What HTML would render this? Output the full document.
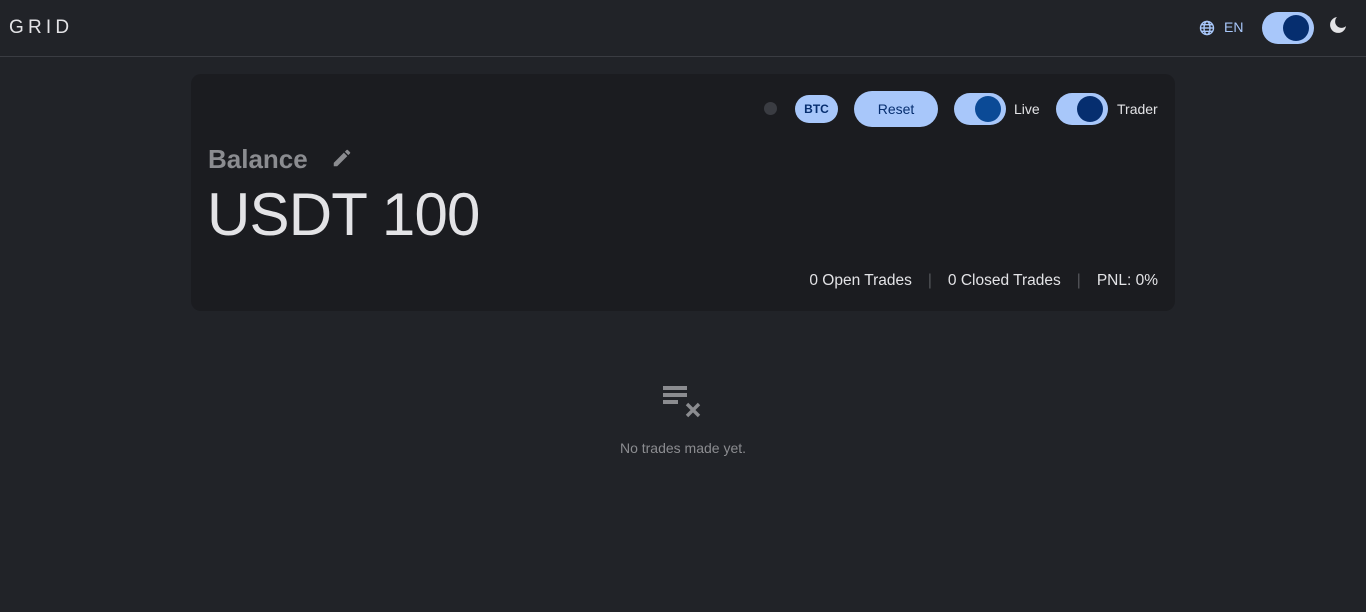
<!DOCTYPE html>
<html><head><meta charset="utf-8"><style>
*{margin:0;padding:0;box-sizing:border-box}
body{width:1366px;height:612px;background:#212328;font-family:"Liberation Sans",sans-serif;color:#e3e3e6;position:relative;overflow:hidden}
.hdr{position:absolute;left:0;top:0;width:1366px;height:57px;border-bottom:1px solid #3a3c42}
.logo{position:absolute;left:9px;top:17px;font-size:19px;letter-spacing:4.2px;color:#e3e3e6}
.abs{position:absolute}
.tog{position:absolute;width:52px;height:32px;border-radius:16px;background:#a8c7fa}
.tog .k{position:absolute;right:5px;top:3px;width:26px;height:26px;border-radius:50%;background:#062e6f}
.card{position:absolute;left:191px;top:74px;width:984px;height:237px;background:#1b1c20;border-radius:10px}
.pill{position:absolute;background:#a8c7fa;color:#062e6f;border-radius:16px;text-align:center}
</style></head><body>
<div class="hdr">
<div class="logo">GRID</div>
<svg class="abs" style="left:1199px;top:20px" width="16" height="16" viewBox="0 0 16 16" fill="none" stroke="#a8c7fa" stroke-width="1.4"><circle cx="8" cy="8" r="6.5"/><ellipse cx="8" cy="8" rx="3" ry="6.5"/><line x1="1.5" y1="8" x2="14.5" y2="8"/><line x1="2.5" y1="4.7" x2="13.5" y2="4.7"/><line x1="2.5" y1="11.3" x2="13.5" y2="11.3"/></svg>
<div class="abs" style="left:1224px;top:19px;font-size:14px;color:#a8c7fa">EN</div>
<div class="tog" style="left:1262px;top:12px"><div class="k"></div></div>
<svg class="abs" style="left:1328px;top:15px" width="20" height="20" viewBox="0 0 20 20"><path d="M9 2a8 8 0 1 0 9 9a6 6 0 0 1-9-9z" fill="#e3e3e6"/></svg>
</div>
<div class="card">
<div class="abs" style="left:573px;top:28px;width:13px;height:13px;border-radius:50%;background:#3a3c42"></div>
<div class="pill" style="left:604px;top:21px;width:43px;height:28px;line-height:28px;font-size:12px;font-weight:bold">BTC</div>
<div class="pill" style="left:663px;top:17px;width:84px;height:36px;line-height:36px;font-size:14px;border-radius:18px">Reset</div>
<div class="tog" style="left:763px;top:19px"><div class="k" style="background:#0b4a96"></div></div>
<div class="abs" style="left:823px;top:27px;font-size:14px">Live</div>
<div class="tog" style="left:865px;top:19px"><div class="k"></div></div>
<div class="abs" style="left:926px;top:27px;font-size:14px">Trader</div>
<div class="abs" style="left:17px;top:70px;font-size:26px;font-weight:bold;color:#8b8c90">Balance</div>
<svg class="abs" style="left:140px;top:73px" width="22" height="22" viewBox="0 0 24 24"><path d="M3 17.25V21h3.75L17.81 9.94l-3.75-3.75L3 17.25zM20.71 7.04a1 1 0 0 0 0-1.41l-2.34-2.34a1 1 0 0 0-1.41 0l-1.83 1.83 3.75 3.75 1.83-1.83z" fill="#8b8c90"/></svg>
<div class="abs" style="left:16px;top:106px;font-size:60px;color:#e3e3e6;letter-spacing:-0.8px">USDT 100</div>
<div class="abs" style="right:17px;top:198px;font-size:15.5px;white-space:nowrap">0 Open Trades<span style="color:#55575c;margin:0 16px">|</span>0 Closed Trades<span style="color:#55575c;margin:0 16px">|</span>PNL: 0%</div>
</div>
<svg class="abs" style="left:661px;top:385px" width="44" height="36" viewBox="0 0 44 36"><g fill="#8b8c90"><rect x="2" y="1" width="24" height="4"/><rect x="2" y="8" width="24" height="4"/><rect x="2" y="15" width="15" height="4"/></g><path d="M26 19l12 12M38 19L26 31" stroke="#8b8c90" stroke-width="3.4"/></svg>
<div class="abs" style="left:0;width:1366px;top:440px;text-align:center;font-size:14px;color:#8b8c90">No trades made yet.</div>
</body></html>
